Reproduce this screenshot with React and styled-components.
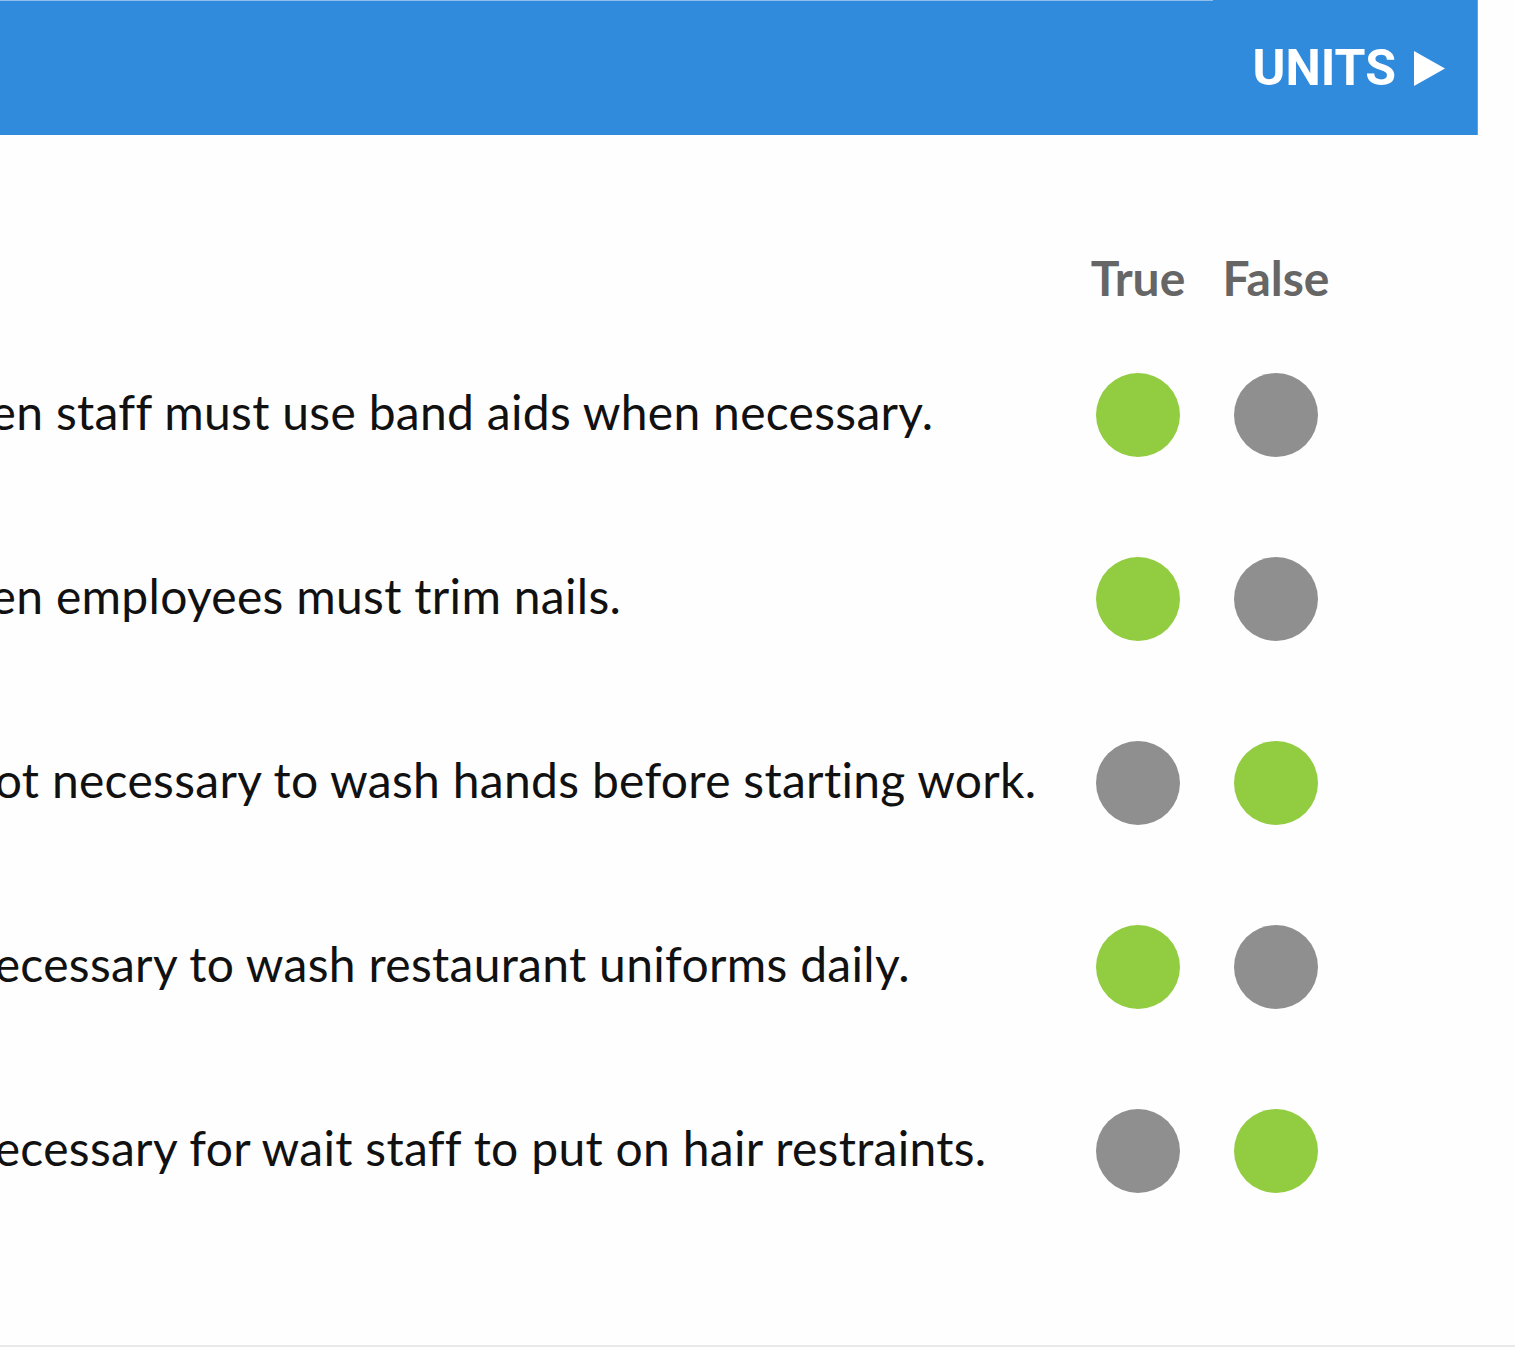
import React from "react";
import styled, { createGlobalStyle } from "styled-components";

const questions = [
  { text: "Kitchen staff must use band aids when necessary.", answer: true },
  { text: "Kitchen employees must trim nails.", answer: true },
  { text: "It is not necessary to wash hands before starting work.", answer: false },
  { text: "It is necessary to wash restaurant uniforms daily.", answer: true },
  { text: "It is necessary for wait staff to put on hair restraints.", answer: false },
];

const App = () => {
  return (
    <>
      <GlobalStyle />
      <Page>
        <Header>
          <Progress />
          <HeaderBody>
            <UnitsLink>
              UNITS
              <svg width="31" height="35" viewBox="0 0 31 35">
                <polygon points="0,0 31,17.5 0,35" fill="#fff" />
              </svg>
            </UnitsLink>
          </HeaderBody>
        </Header>

        <Quiz>
          <span />
          <ColumnLabel>True</ColumnLabel>
          <ColumnLabel>False</ColumnLabel>
          {questions.map((q) => (
            <React.Fragment key={q.text}>
              <Statement>{q.text}</Statement>
              <Choice>
                <Dot $selected={q.answer} />
              </Choice>
              <Choice>
                <Dot $selected={!q.answer} />
              </Choice>
            </React.Fragment>
          ))}
        </Quiz>
      </Page>
    </>
  );
};

const GlobalStyle = createGlobalStyle`
  html, body {
    margin: 0;
    padding: 0;
    background: #ffffff;
    overflow: hidden;
  }
`;

const Page = styled.div`
  width: 100%;
  height: 1347px;
  display: flex;
  flex-direction: column;
  overflow: hidden;
  box-sizing: border-box;
  border-bottom: 2px solid #e9e9e9;
  background: #fefefe;
`;

const Header = styled.div`
  width: 1478px;
  height: 135px;
  flex-shrink: 0;
  display: flex;
  flex-direction: column;
  background: #318bdd;
  border-right: 1px solid #5fa5e6;
  box-sizing: border-box;
`;

const Progress = styled.div`
  width: 1213px;
  height: 1px;
  background: #8fbdec;
`;

const HeaderBody = styled.div`
  flex: 1;
  display: flex;
  justify-content: flex-end;
  align-items: center;
  padding-right: 32px;
`;

const UnitsLink = styled.div`
  display: flex;
  align-items: center;
  gap: 18px;
  font-family: Roboto, "Liberation Sans", sans-serif;
  font-weight: 700;
  font-size: 50px;
  line-height: 1;
  color: #ffffff;
  cursor: pointer;
`;

const Quiz = styled.div`
  margin-top: 97px;
  margin-left: -121px;
  padding-right: 197px;
  display: grid;
  grid-template-columns: 1fr 84px 84px;
  grid-template-rows: 91px;
  grid-auto-rows: 184px;
  column-gap: 54px;
  align-items: center;
`;

const ColumnLabel = styled.div`
  justify-self: center;
  font-family: Lato, "Open Sans", sans-serif;
  font-weight: 700;
  font-size: 48px;
  color: #666666;
  white-space: nowrap;
`;

const Statement = styled.div`
  padding-bottom: 7px;
  font-family: Lato, "Open Sans", sans-serif;
  font-size: 48px;
  letter-spacing: 0.3px;
  color: #111111;
  white-space: nowrap;
`;

const Choice = styled.div`
  display: flex;
  justify-content: center;
`;

const Dot = styled.div`
  width: 84px;
  height: 84px;
  border-radius: 50%;
  background: ${(p) => (p.$selected ? "#92cc41" : "#8f8f8f")};
  cursor: pointer;
`;

export default App;
